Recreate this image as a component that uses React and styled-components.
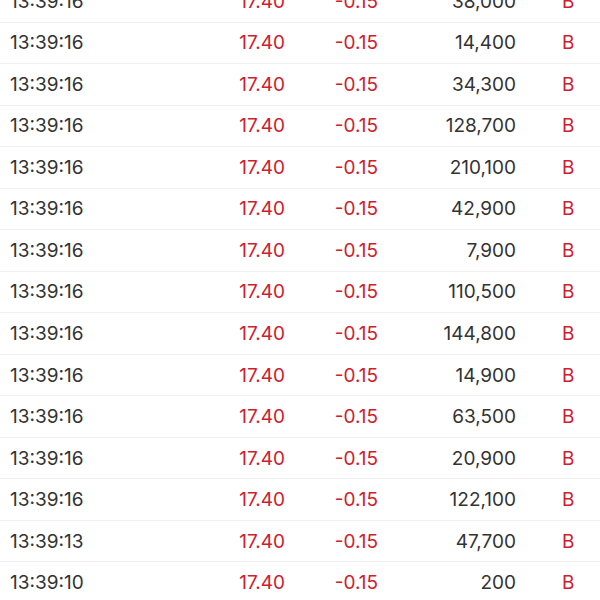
import React from "react";
import styled, { createGlobalStyle } from "styled-components";

const Global = createGlobalStyle`
  html, body { margin: 0; padding: 0; background: #ffffff; overflow: hidden; }
  body { font-family: Inter, "Noto Sans", "Liberation Sans", sans-serif; }
`;

const List = styled.div`
  margin-top: -19px;
  display: flex;
  flex-direction: column;
`;

const Row = styled.div`
  box-sizing: border-box;
  height: 41.54px;
  display: grid;
  grid-template-columns: 200px 75px 93px 138px 1fr;
  align-items: center;
  padding-left: 10px;
  border-bottom: 1px solid #f1f1f1;
  font-size: 19px;
  letter-spacing: 0;
`;

const Cell = styled.div`
  color: ${(p) => (p.$red ? "#d0202c" : "#333333")};
  text-align: ${(p) => p.$align || "left"};
  padding-left: ${(p) => p.$pl || 0}px;
  white-space: nowrap;
`;

const rows = [
  ["13:39:16", "38,000"],
  ["13:39:16", "14,400"],
  ["13:39:16", "34,300"],
  ["13:39:16", "128,700"],
  ["13:39:16", "210,100"],
  ["13:39:16", "42,900"],
  ["13:39:16", "7,900"],
  ["13:39:16", "110,500"],
  ["13:39:16", "144,800"],
  ["13:39:16", "14,900"],
  ["13:39:16", "63,500"],
  ["13:39:16", "20,900"],
  ["13:39:16", "122,100"],
  ["13:39:13", "47,700"],
  ["13:39:10", "200"],
];

export default function App() {
  return (
    <>
      <Global />
      <List>
        {rows.map(([t, v], i) => (
          <Row key={i}>
            <Cell>{t}</Cell>
            <Cell $red $align="right">17.40</Cell>
            <Cell $red $align="right">-0.15</Cell>
            <Cell $align="right">{v}</Cell>
            <Cell $red $pl={46}>B</Cell>
          </Row>
        ))}
      </List>
    </>
  );
}
